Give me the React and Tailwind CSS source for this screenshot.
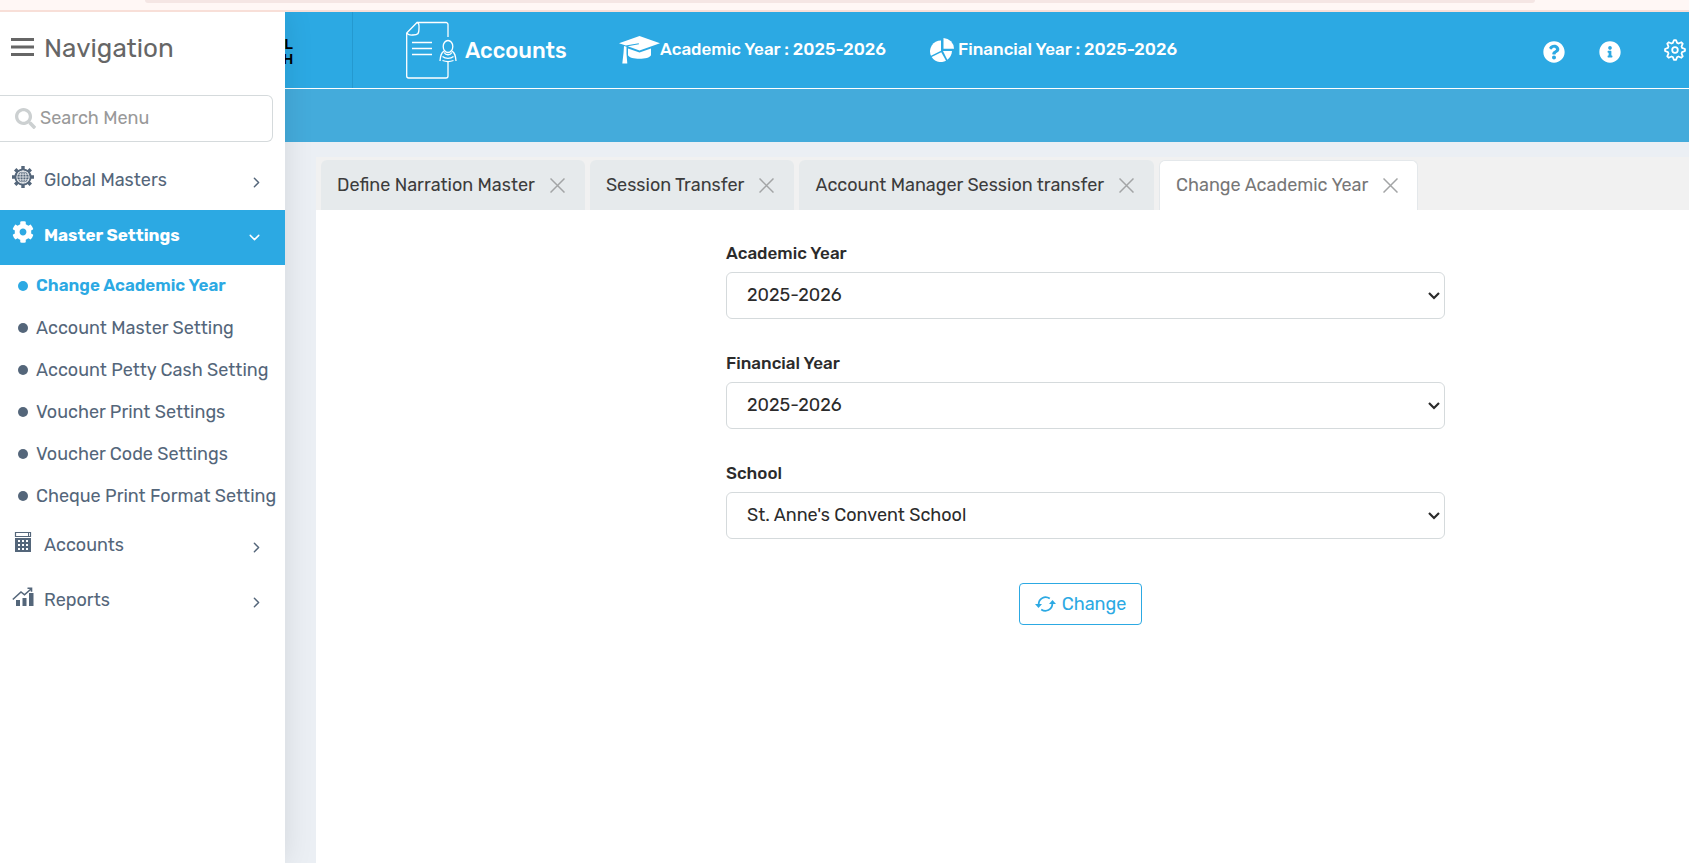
import { useState } from "react";
import { FaCog, FaSearch, FaQuestionCircle, FaInfoCircle } from "react-icons/fa";
import { ChevronRight, ChevronDown } from "lucide-react";

const subItems = [
  "Change Academic Year",
  "Account Master Setting",
  "Account Petty Cash Setting",
  "Voucher Print Settings",
  "Voucher Code Settings",
  "Cheque Print Format Setting",
];

const tabs = [
  "Define Narration Master",
  "Session Transfer",
  "Account Manager Session transfer",
  "Change Academic Year",
];

function BarsIcon() {
  return (
    <svg width="23" height="18" viewBox="0 0 23 18" fill="currentColor">
      <path d="M0 0h23v3H0zM0 7.5h23v3H0zM0 15h23v3H0z" />
    </svg>
  );
}

function GlobeGearIcon() {
  return (
    <svg width="22" height="22" viewBox="0 0 22 22" fill="none" stroke="currentColor">
      <path
        d="M11 0v22M0 11h22M3.2 3.2l15.6 15.6M18.8 3.2L3.2 18.8"
        strokeWidth="3.4"
      />
      <circle cx="11" cy="11" r="7.6" fill="#fff" strokeWidth="2" />
      <circle cx="11" cy="11" r="5.8" fill="currentColor" stroke="none" />
      <g stroke="#fff" strokeWidth="0.7">
        <path d="M11 5v12M5 11h12M6 8.2h10M6 13.8h10" />
        <ellipse cx="11" cy="11" rx="3" ry="6" />
      </g>
    </svg>
  );
}

function CalculatorIcon() {
  return (
    <svg width="22" height="22" viewBox="0 0 22 22">
      <path d="M3.5 1.5h15v4h-15z" fill="none" stroke="currentColor" strokeWidth="1.2" />
      <path d="M16 2h1v3h-1z" fill="currentColor" />
      <path d="M3 7h16v14H3z" fill="currentColor" />
      <path
        d="M6 9h2v2H6zM10 9h2v2h-2zM14 9h2v2h-2zM6 13h2v2H6zM10 13h2v2h-2zM14 13h2v2h-2zM6 17h2v2H6zM10 17h2v2h-2zM14 17h2v2h-2z"
        fill="#fff"
      />
    </svg>
  );
}

function ReportsIcon() {
  return (
    <svg width="22" height="22" viewBox="0 0 22 22">
      <path d="M4 14h4v6H4zM10.5 12h4v8h-4zM17 7h4.500v13H17z" fill="currentColor" />
      <path
        d="M.8 13.5L9 6l3.500 2.800L19 3M15.500 2.300h4v3.500"
        fill="none"
        stroke="currentColor"
        strokeWidth="1.6"
      />
    </svg>
  );
}

function LedgerIcon() {
  return (
    <svg width="52" height="58" viewBox="0 0 52 58" fill="none" stroke="#fff" strokeWidth="1.3">
      <path d="M43 16V3.500a2 2 0 0 0-2-2H12L1.700 12v43a2 2 0 0 0 2 2H41a2 2 0 0 0 2-2V41" />
      <path d="M12 1.500c2.500.500 2 3 2 5.500 0 6-1 7-6 7-2.500 0-5 .500-6-2" />
      <path d="M7 21.500h20M7 27.500h20M7 33.500h20" strokeWidth="1.5" />
      <ellipse cx="43" cy="25.500" rx="4.800" ry="6" />
      <path d="M39 30c-3 2-3.500 4.500-4 10M47 30c3 2 3.500 4.500 4 10M39 31.500c2 3 6 3 8 0M37.500 35.500c3 2.500 8 2.500 11 0M37.500 39.500c3 1.200 8 1.200 11 0" />
    </svg>
  );
}

function GraduationIcon() {
  return (
    <svg width="41" height="28" viewBox="0 0 41 28" fill="#fff">
      <path d="M20.500 0L41 7.200 20.500 14.500 8.800 10.300 20 8.300l-.3-1L6.800 9.500 0 7.200z" />
      <path d="M9 12.500l11.500 4 11.500-4v6.700c-2 4.800-21 4.800-23 0z" />
      <path d="M5 10l2.500.8v7l.8 9.700h-5L4.500 17z" />
    </svg>
  );
}

function PieIcon() {
  return (
    <svg width="24" height="24" viewBox="0 0 24 24" fill="#fff">
      <path d="M13.500 0A10.800 10.800 0 0 1 24 10.800H13.500z" />
      <path d="M11 2.500v10.200L1 17.800A10.800 10.800 0 0 1 11 2.500z" />
      <path d="M11.300 14.200L16 22.800C11 25.500 4.500 23.800 1.700 19z" />
      <path d="M13 13h9c-.3 3.800-1.800 6.800-4.700 8.800z" />
    </svg>
  );
}

// outline gear with pointed teeth
function GearOutlineIcon() {
  const points = [];
  for (let i = 0; i < 32; i++) {
    const r = i % 4 < 2 ? 10 : 7.4;
    const a = ((i - 0.5) * Math.PI) / 16 - Math.PI / 2;
    points.push(`${12 + r * Math.cos(a)},${12 + r * Math.sin(a)}`);
  }
  return (
    <svg width="24" height="24" viewBox="0 0 24 24" fill="none" stroke="#fff" strokeWidth="1.8">
      <polygon points={points.join(" ")} strokeLinejoin="round" />
      <circle cx="12" cy="12" r="2.8" />
    </svg>
  );
}

function RefreshIcon() {
  return (
    <svg width="21" height="16" viewBox="0 0 21 16" fill="none" stroke="currentColor" strokeWidth="1.8">
      <path d="M14.800 2.600C10 -.500 3.800 2 3.600 8.500M6.200 13.400C11 16.500 17.200 14 17.400 7.500" />
      <path d="M0 8h7l-3.500 4zM21 8h-7l3.500-4z" fill="currentColor" stroke="none" />
    </svg>
  );
}

function CloseIcon() {
  return (
    <svg width="15" height="15" viewBox="0 0 15 15" stroke="#a3a5a6" strokeWidth="1.5">
      <path d="M.5.500l14 14M14.500.500l-14 14" />
    </svg>
  );
}

function MenuRow({ icon, label, active }) {
  return (
    <a
      href="#"
      className={
        active
          ? "flex h-[55px] items-center bg-[#2ca9e3] pl-3 pr-[22px] text-[17px] font-bold text-white"
          : "flex h-[55px] items-center pl-3 pr-5 text-[#54667a]"
      }
    >
      <span className="mr-[10px] pb-3">{icon}</span>
      <span className="flex-1 pb-1">{label}</span>
      {active ? <ChevronDown size={17} /> : <ChevronRight size={17} />}
    </a>
  );
}

function Sidebar() {
  return (
    <aside className="relative z-10 w-[285px] shrink-0 bg-white text-[18px] shadow-[0_0_28px_rgba(0,0,0,0.1)]">
      <div className="flex h-[83px] items-center gap-[10px] pb-[10px] pl-[11px] text-[#666]">
        <button aria-label="Toggle navigation" className="pb-1">
          <BarsIcon />
        </button>
        <h2 className="text-[26px]">Navigation</h2>
      </div>

      <div className="mr-3 flex h-[47px] items-center gap-1 rounded-r-md border border-l-0 border-[#d5dadc] pl-[15px]">
        <FaSearch size={21} className="shrink-0 text-[#ccd0d1]" />
        <input
          type="text"
          aria-label="Search Menu"
          placeholder="Search Menu"
          className="w-full min-w-0 outline-none placeholder:text-[#999]"
        />
      </div>

      <nav className="pt-[13px]">
        <MenuRow icon={<GlobeGearIcon />} label="Global Masters" />
        <MenuRow icon={<FaCog size={22} />} label="Master Settings" active />
        <ul className="pb-[3px]">
          {subItems.map((item, i) => (
            <li key={item}>
              <a
                href="#"
                className={
                  i === 0
                    ? "flex h-[42px] items-center gap-2 pl-[18px] text-[17px] font-semibold text-[#2ca9e3]"
                    : "flex h-[42px] items-center gap-2 pl-[18px] text-[#54667a]"
                }
              >
                <span className="size-[10px] rounded-full bg-current" />
                <span className="whitespace-nowrap">{item}</span>
              </a>
            </li>
          ))}
        </ul>
        <MenuRow icon={<CalculatorIcon />} label="Accounts" />
        <MenuRow icon={<ReportsIcon />} label="Reports" />
      </nav>
    </aside>
  );
}

function Header() {
  return (
    <header className="flex h-[77px] items-stretch border-b border-white bg-[#2ca9e3] font-medium text-white">
      <div className="w-[68px] border-r border-[#2499d0] pt-[25px]">
        <div className="flex w-2 flex-col items-end font-['Liberation_Sans',sans-serif] text-[14px] font-bold leading-[15px] text-black">
          <span>L</span>
          <span>H</span>
        </div>
      </div>
      <div className="flex flex-1 items-center pl-[52px] pr-[2px] text-[17px]">
        <LedgerIcon />
        <h1 className="ml-2 w-[154px] text-[22px]">Accounts</h1>
        <GraduationIcon />
        <span className="w-[270px] whitespace-nowrap">Academic Year : 2025-2026</span>
        <PieIcon />
        <span className="ml-1 whitespace-nowrap">Financial Year : 2025-2026</span>
        <div className="ml-auto flex items-center">
          <button aria-label="Help" className="mr-[34px] pt-1">
            <FaQuestionCircle size={22} />
          </button>
          <button aria-label="Information" className="mr-[42px] pt-1">
            <FaInfoCircle size={22} />
          </button>
          <button aria-label="Settings">
            <GearOutlineIcon />
          </button>
        </div>
      </div>
    </header>
  );
}

function Tab({ label, active }) {
  return (
    <div
      className={
        active
          ? "flex h-[50px] items-center gap-[15px] rounded-t-md border border-b-0 border-[#e4e8eb] bg-white pl-4 pr-[19px] text-[#777]"
          : "flex h-[50px] items-center gap-[15px] rounded-t-md bg-[#e6eaec] pl-4 pr-5 text-[#3c3c3c]"
      }
    >
      <button className="whitespace-nowrap">{label}</button>
      <button aria-label={`Close ${label}`}>
        <CloseIcon />
      </button>
    </div>
  );
}

function SelectField({ id, label, value, onChange, options }) {
  return (
    <div className="flex flex-col gap-[6px]">
      <label htmlFor={id} className="text-[17px] font-medium leading-[26px]">
        {label}
      </label>
      <div className="relative">
        <select
          id={id}
          value={value}
          onChange={(e) => onChange(e.target.value)}
          className="h-[47px] w-full appearance-none rounded-md border border-[#d5dadc] bg-white pl-5 pr-6"
        >
          {options.map((option) => (
            <option key={option}>{option}</option>
          ))}
        </select>
        <svg
          width="12"
          height="8"
          viewBox="0 0 12 8"
          fill="none"
          stroke="currentColor"
          strokeWidth="2.2"
          className="pointer-events-none absolute right-[5px] top-5"
        >
          <path d="M1 1l5 5 5-5" />
        </svg>
      </div>
    </div>
  );
}

function App() {
  const [academicYear, setAcademicYear] = useState("2025-2026");
  const [financialYear, setFinancialYear] = useState("2025-2026");
  const [school, setSchool] = useState("St. Anne's Convent School");

  return (
    <div className="flex min-h-screen flex-col overflow-hidden bg-white font-[Rubik,Roboto,sans-serif]">
      {/* Top strip */}
      <div className="relative z-20 h-3 border-b-2 border-[#f8dfd8] bg-[#fff7f5] pl-[145px] pr-[154px]">
        <div className="h-[3px] rounded-b-full bg-[#f5e6e4]" />
      </div>

      <div className="flex flex-1">
        <Sidebar />

        <div className="flex min-w-0 flex-1 flex-col bg-[#ebeff4]">
          <Header />
          <div className="h-[53px] bg-[#44abdb]" />

          <main className="ml-[31px] mt-[15px] flex-1 bg-white text-[18px] text-[#2b2b2b]">
            <div className="flex gap-[5px] bg-[#f1f1f1] pl-[5px] pt-[3px]">
              {tabs.map((tab) => (
                <Tab key={tab} label={tab} active={tab === "Change Academic Year"} />
              ))}
            </div>

            <form
              className="grid grid-cols-[410fr_719fr_244fr] pt-[30px]"
              onSubmit={(e) => e.preventDefault()}
            >
              <div className="col-start-2 flex flex-col gap-[31px]">
                <SelectField
                  id="academic-year"
                  label="Academic Year"
                  value={academicYear}
                  onChange={setAcademicYear}
                  options={["2025-2026", "2024-2025"]}
                />
                <SelectField
                  id="financial-year"
                  label="Financial Year"
                  value={financialYear}
                  onChange={setFinancialYear}
                  options={["2025-2026", "2024-2025"]}
                />
                <SelectField
                  id="school"
                  label="School"
                  value={school}
                  onChange={setSchool}
                  options={["St. Anne's Convent School"]}
                />
                <div className="flex justify-center pr-[10px] pt-[13px]">
                  <button
                    type="submit"
                    className="flex h-[42px] items-center gap-[6px] rounded border border-[#2ca9e3] px-[15px] text-[#2ca9e3]"
                  >
                    <RefreshIcon />
                    Change
                  </button>
                </div>
              </div>
            </form>
          </main>
        </div>
      </div>
    </div>
  );
}

export default App;
